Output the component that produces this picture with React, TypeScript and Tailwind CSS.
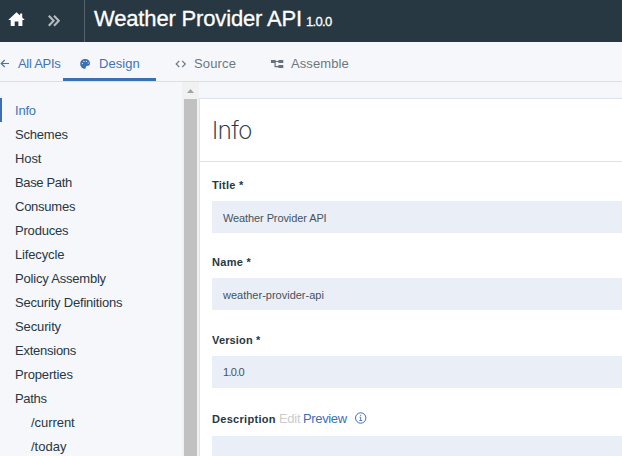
const navItems = [
  { name: "Info", track: "tracking-[-0.2px]" },
  { name: "Schemes", track: "tracking-[-0.2px]" },
  { name: "Host", track: "tracking-[-0.1px]" },
  { name: "Base Path", track: "tracking-[-0.35px]" },
  { name: "Consumes", track: "tracking-[-0.25px]" },
  { name: "Produces", track: "tracking-[-0.2px]" },
  { name: "Lifecycle", track: "tracking-[-0.15px]" },
  { name: "Policy Assembly", track: "tracking-[-0.2px]" },
  { name: "Security Definitions", track: "tracking-[-0.2px]" },
  { name: "Security", track: "tracking-[-0.12px]" },
  { name: "Extensions", track: "tracking-[-0.25px]" },
  { name: "Properties", track: "tracking-[-0.15px]" },
  { name: "Paths", track: "tracking-[-0.3px]" },
  { name: "/current", track: "tracking-[-0.05px]", nested: true },
  { name: "/today", track: "tracking-[0px]", nested: true },
];

function Header() {
  return (
    <header className="flex h-[42px] shrink-0 bg-[#273842] text-white">
      <div className="flex w-[85px] shrink-0 items-start border-r border-[#53626b]">
        <svg className="mt-[12px] ml-[8px]" width="18" height="15" viewBox="0 0 18 15" fill="white">
          <path d="M8.5 0.2 0.2 8h2.5v6h4V9.5h3.7V14h4V8h2.4l-2.6-2.4V1.5h-2.1v2z" />
        </svg>
        <svg className="mt-[15px] ml-[22px]" width="12" height="12" viewBox="0 0 12 12" fill="none" stroke="#b4bcc1" strokeWidth="2.1">
          <path d="M.8 .8 5.6 5.8.8 10.8M6 .8l4.8 5L6 10.8" />
        </svg>
      </div>
      <h1 className="flex items-baseline pl-[9px] leading-[37px] whitespace-nowrap">
        <span className="w-[212px] text-[22px] tracking-[-0.16px] [-webkit-text-stroke:0.3px_white]">Weather Provider API</span>
        <span className="text-[13px] tracking-[-0.7px] [-webkit-text-stroke:0.3px_white]">1.0.0</span>
      </h1>
    </header>
  );
}

function Tabs() {
  return (
    <nav className="flex h-[40px] shrink-0 border-b border-[#dcdee3] text-[13px] leading-[43px] whitespace-nowrap text-[#6b7780]">
      <a className="flex w-[63px] shrink-0 text-[#4272b8]">
        <svg className="mt-[17px] mr-[8px] shrink-0" width="10" height="10" viewBox="0 0 10 10" fill="none" stroke="#4272b8" strokeWidth="1.2">
          <path d="M9 4.5H1.4M4.7 1 1.2 4.5l3.5 3.5" />
        </svg>
        <span className="tracking-[-0.3px]">All APIs</span>
      </a>
      <a className="flex w-[93px] shrink-0 border-b-[3px] border-[#3d70b2] pl-[17px] text-[#4272b8]">
        <svg className="mt-[17px] mr-[8px] shrink-0" width="11" height="10" viewBox="0 0 11 10">
          <path fill="#3d70b2" d="M5.3.1C2.4.1.2 2 .2 4.7c0 2.8 2 5 4.6 5 1.4 0 .7-1.7 1.3-2.3.7-.8 3.9.2 3.9-2.8C10 1.8 8 .1 5.3.1z" />
          <g fill="#f5f7fb"><circle cx="2.4" cy="4.6" r=".6" /><circle cx="4" cy="2.4" r=".6" /><circle cx="6.4" cy="2.3" r=".6" /><circle cx="8.2" cy="4" r=".6" /></g>
        </svg>
        <span className="tracking-[0.05px]">Design</span>
      </a>
      <a className="flex pl-[19px]">
        <svg className="mt-[17px] mr-[7px] shrink-0" width="12" height="10" viewBox="0 0 12 10" fill="none" stroke="#6b7780" strokeWidth="1.2">
          <path d="M4.3 1.8 1.2 5l3.1 3.2M7.2 1.8 10.3 5 7.2 8.2" />
        </svg>
        <span className="w-[77px] tracking-[0.15px]">Source</span>
      </a>
      <a className="flex">
        <svg className="mt-[17px] mr-[7px] shrink-0" width="13" height="10" viewBox="0 0 13 10" fill="#65727b">
          <path d="M0 1h4.7v3H0zM7.4 1h4.9v3H7.4zM7.4 6h4.9v3H7.4zM4.5 2h3v1H4.5zM3.5 4h1.2v3H8v1.2H3.5z" />
        </svg>
        <span className="tracking-[0.1px]">Assemble</span>
      </a>
    </nav>
  );
}

type FieldProps = { label: string; value: string; gap: string; labelTrack: string; valueStyle: string };

function Field({ label, value, gap, labelTrack, valueStyle }: FieldProps) {
  return (
    <div className={gap}>
      <label className={`block h-[16px] text-[11px] leading-[16px] font-bold text-[#273842] ${labelTrack}`}>{label}</label>
      <div className={`mt-[8px] h-[32px] bg-[#eaeef6] pl-[11px] text-[11px] text-[#46535d] ${valueStyle}`}>{value}</div>
    </div>
  );
}

export default function App() {
  return (
    <div className="flex h-[456px] w-[622px] flex-col overflow-hidden bg-[#f5f7fb] font-['Liberation_Sans',Arial,sans-serif]">
      <Header />
      <Tabs />
      <div className="flex min-h-0 flex-1">
        <aside className="w-[182px] shrink-0 overflow-hidden pt-[16px] text-[13px] leading-[25px] text-[#273842]">
          {navItems.map((item, i) => (
            <div
              key={item.name}
              className={`h-[24px] border-l-2 ${i === 0 ? "border-[#3d70b2] text-[#4272b8]" : "border-transparent"} ${item.nested ? "pl-[29px]" : "pl-[13px]"}`}
            >
              <span className={item.track}>{item.name}</span>
            </div>
          ))}
        </aside>
        <div className="flex w-[17px] shrink-0 flex-col items-center bg-[#f1f1f1]">
          <svg className="h-[17px] w-[17px] shrink-0" viewBox="0 0 17 17" fill="#a3a3a3">
            <path d="M5 11h7L8.5 7z" />
          </svg>
          <div className="w-[13px] flex-1 bg-[#c1c1c1]" />
        </div>
        <main className="flex-1 pt-[16px]">
          <section className="h-[358px] overflow-hidden border-t border-l border-[#dbe3ec] bg-white">
            <h2 className="h-[63px] border-b border-[#dfe3e8] pl-[12px] font-['Inter',sans-serif] text-[24px] leading-[63px] font-extralight tracking-[-0.4px] text-[#273842] [-webkit-text-stroke:0.2px_#273842]">Info</h2>
            <div className="pl-[12px]">
              <Field label="Title *" value="Weather Provider API" gap="mt-[15px]" labelTrack="tracking-[0.25px]" valueStyle="leading-[35px] tracking-[-0.1px]" />
              <Field label="Name *" value="weather-provider-api" gap="mt-[21px]" labelTrack="tracking-[0.3px]" valueStyle="leading-[35px] tracking-[0px]" />
              <Field label="Version *" value="1.0.0" gap="mt-[22px]" labelTrack="tracking-[0.15px]" valueStyle="leading-[33px] tracking-[-0.7px]" />
              <div className="mt-[22px] flex h-[18px] items-baseline leading-[18px] whitespace-nowrap">
                <span className="w-[67px] text-[11px] font-bold tracking-[0.3px] text-[#273842]">Description</span>
                <span className="w-[24px] text-[13px] tracking-[-0.3px] text-[#cccccc]">Edit</span>
                <span className="w-[52px] text-[13px] tracking-[-0.35px] text-[#3d70b2]">Preview</span>
                <svg className="mt-[2px] self-start" width="12" height="12" viewBox="0 0 12 12" fill="none" stroke="#4272b8">
                  <circle cx="5.7" cy="6" r="5.2" />
                  <path d="M5.7 5v3.5M5.7 2.8v1.2M4.5 5.2h1.2M4.3 8.5h2.8" strokeWidth=".9" />
                </svg>
              </div>
              <div className="mt-[8px] h-[32px] bg-[#eaeef6]" />
            </div>
          </section>
        </main>
      </div>
    </div>
  );
}
